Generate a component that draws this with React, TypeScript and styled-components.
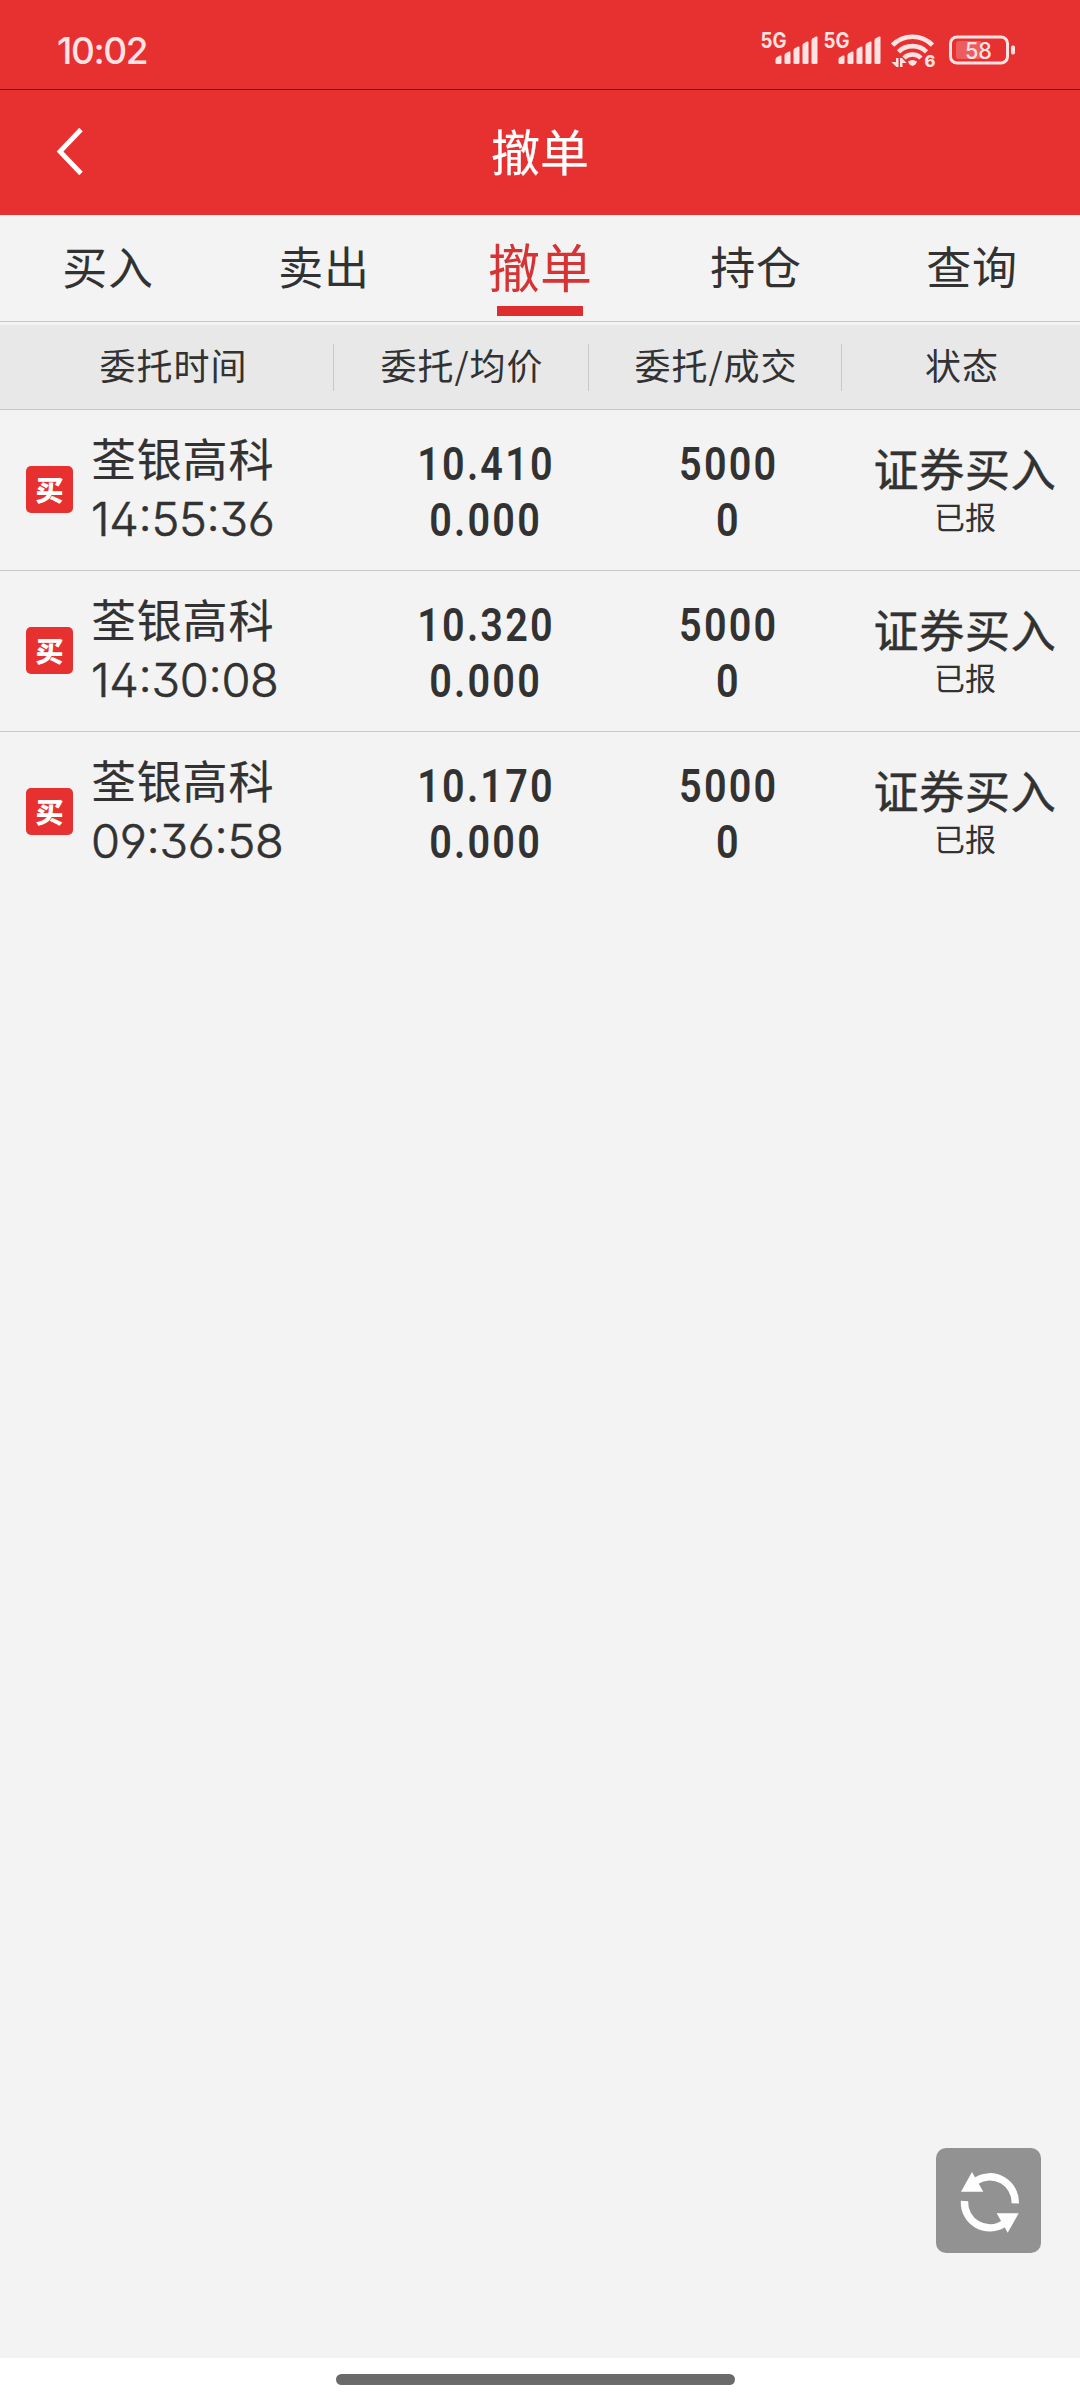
import React from "react";
import styled, { createGlobalStyle } from "styled-components";

const sans = `Inter, "Noto Sans CJK SC", sans-serif`;
const cjk = `"Noto Sans CJK SC", sans-serif`;
const pale = "#ffe3e3";

const GlobalStyle = createGlobalStyle`
  * { box-sizing: border-box; }
  body { margin: 0; background: #f3f3f3; }
`;

const Screen = styled.div`
  position: relative;
  display: flex;
  flex-direction: column;
  width: 1080px;
  height: 2400px;
  background: #f3f3f3;
  color: #323232;
  font-family: ${cjk};
  white-space: nowrap;
  overflow: hidden;
`;

const StatusBar = styled.div`
  display: flex;
  align-items: center;
  justify-content: space-between;
  height: 90px;
  padding: 12px 65px 0 57px;
  background: #e73131;
  border-bottom: 1px solid #4a0d10;
`;

const Clock = styled.span`
  font: 500 37px/40px ${sans};
  letter-spacing: -1.4px;
  color: ${pale};
`;

const StatusIcons = styled.svg`
  display: block;
  width: 260px;
  height: 56px;
`;

const TitleBar = styled.header`
  display: grid;
  grid-template-columns: 140px 1fr 140px;
  align-items: center;
  height: 125px;
  padding-bottom: 2px;
  background: #e73131;
`;

const BackButton = styled.button`
  display: flex;
  padding: 0 0 0 54px;
  border: 0;
  background: none;
`;

const Title = styled.h1`
  margin: 0;
  padding-bottom: 3px;
  text-align: center;
  color: #fff;
  font: 400 49px/60px ${cjk};
  -webkit-text-stroke: 0.2px currentColor;
`;

const Tabs = styled.nav`
  display: grid;
  grid-template-columns: repeat(5, 1fr);
  height: 107px;
  border-bottom: 1px solid #c8c8c8;
`;

const Tab = styled.div<{ $active?: boolean }>`
  display: flex;
  flex-direction: column;
  align-items: center;
  justify-content: space-between;
  padding: 20px 0 5px;
  font-size: ${(p) => (p.$active ? 52 : 45)}px;
  line-height: 62px;
  letter-spacing: ${(p) => (p.$active ? 0 : 0.8)}px;
  color: ${(p) => (p.$active ? "#d63434" : "#323232")};
`;

const Underline = styled.span`
  width: 86px;
  height: 10px;
  background: #de2d2f;
`;

const HeadRow = styled.div`
  display: grid;
  grid-template-columns: 334px 255px 253px 1fr;
  align-items: center;
  height: 88px;
  border-top: 3px solid #f3f3f3;
  border-bottom: 1px solid #c8c8c8;
  background: #e8e8e8;
`;

const HeadCell = styled.div<{ $shift?: number }>`
  height: 47px;
  padding-left: ${(p) => p.$shift ?? 2}px;
  border-right: 1px solid #c8c8c8;
  text-align: center;
  font-size: 36px;
  line-height: 40px;
  letter-spacing: 1px;
  &:last-child { border-right: 0; }
`;

const OrderRow = styled.div`
  display: grid;
  grid-template-columns: 91px 272px 243px 243px 1fr;
  height: 161px;
  border-bottom: 1px solid #c8c8c8;
  &:last-child { border-bottom: 0; }
`;

const Badge = styled.span`
  align-self: center;
  margin: 0 0 2px 26px;
  width: 47px;
  height: 47px;
  border-radius: 5px;
  background: #e73131;
  color: #fff;
  text-align: center;
  font: 900 28px/47px ${cjk};
`;

const NameCell = styled.div`
  padding-top: 18px;
`;

const Name = styled.div`
  height: 60px;
  font: 400 45px/60px ${cjk};
  letter-spacing: 0.8px;
  -webkit-text-stroke: 0.2px currentColor;
`;

const Time = styled.div`
  font: 300 47px/62px ${sans};
  letter-spacing: -0.3px;
  -webkit-text-stroke: 0.6px currentColor;
  font-feature-settings: "cv09", "cv03", "cv04", "ss01", "calt";
`;

const NumberCell = styled.div`
  display: flex;
  flex-direction: column;
  align-items: center;
  padding-top: 26px;
`;

const Figure = styled.span`
  font: 600 46px/56px Roboto, sans-serif;
  letter-spacing: 2.6px;
  margin-right: -2.6px;
  transform: scaleX(0.86);
`;

const StateCell = styled.div`
  display: flex;
  flex-direction: column;
  align-items: center;
  padding: 30px 0 0 1px;
`;

const Side = styled.div`
  height: 56px;
  font: 400 45px/56px ${cjk};
  letter-spacing: 0.8px;
  -webkit-text-stroke: 0.5px currentColor;
`;

const State = styled.div`
  font: 400 31px/40px ${cjk};
`;

const Refresh = styled.button`
  position: absolute;
  left: 936px;
  top: 2148px;
  width: 105px;
  height: 105px;
  padding: 0;
  border: 0;
  border-radius: 10px;
  background: #929292;
`;

const HomeBar = styled.footer`
  display: flex;
  justify-content: center;
  align-items: flex-start;
  margin-top: auto;
  height: 42px;
  padding: 16px 9px 0 0;
  background: #fff;
`;

const HomePill = styled.span`
  width: 399px;
  height: 11px;
  border-radius: 6px;
  background: #6a6a6a;
`;

const Signal = ({ x }: { x: number }) => (
  <g transform={`translate(${x} 0)`}>
    <text x="0" y="17" fontFamily="Inter" fontWeight="700" fontSize="21" textLength="26" lengthAdjust="spacingAndGlyphs">5G</text>
    {[7, 11, 16, 21, 26].map((h, i) => (
      <path key={h} d={`M${15 + i * 9} 31.5v${-(h - 4)}q0-1.5 1.4-2.3l3-1.6q1.6-.5 1.6 1V31.5q0 1.5-1.5 1.5h-3q-1.5 0-1.5-1.5z`} />
    ))}
  </g>
);

const rows = [
  { time: "14:55:36", price: "10.410" },
  { time: "14:30:08", price: "10.320" },
  { time: "09:36:58", price: "10.170" },
];

export default function App() {
  return (
    <Screen>
      <GlobalStyle />
      <StatusBar>
        <Clock>10:02</Clock>
        <StatusIcons viewBox="0 -8 260 56" fill={pale}>
          <Signal x={5.5} />
          <Signal x={68.5} />
          <g fill="none" stroke={pale} strokeWidth="4.600">
            <path d="M137.500 14.200A28 28 0 0 1 177.500 14.200" />
            <path d="M143.500 20.800A20 20 0 0 1 171.500 20.800" />
            <path d="M149 27A12 12 0 0 1 166 27" />
          </g>
          <path d="M153 30.500Q157.500 27.500 162 30.500Q161 34 157.500 35Q154 34 153 30.500Z" />
          <path d="M141 27h2.500v9h-2l-5-5h4.500zM145 36v-9h2l4.500 5h-4v4z" />
          <text x="169.500" y="36" fontFamily="Inter" fontWeight="800" fontSize="16.500" stroke="#e73131" strokeWidth="2" paintOrder="stroke">6</text>
          <rect x="195.500" y="6" width="57" height="26" rx="6.500" fill="none" stroke={pale} strokeWidth="3" />
          <rect x="201" y="10" width="26" height="18" rx="3" opacity="0.25" />
          <rect x="256" y="14.500" width="4" height="9" rx="1.700" />
          <text x="210" y="27.500" fontFamily="Inter" fontWeight="500" fontSize="23" textLength="27" lengthAdjust="spacingAndGlyphs">58</text>
        </StatusIcons>
      </StatusBar>

      <TitleBar>
        <BackButton aria-label="返回">
          <svg width="32" height="50" viewBox="0 0 32 50" fill="none" stroke="#fff" strokeWidth="4.800">
            <path d="M27 2.500L6 24.500L27 46.500" />
          </svg>
        </BackButton>
        <Title>撤单</Title>
      </TitleBar>

      <Tabs>
        <Tab>买入</Tab>
        <Tab>卖出</Tab>
        <Tab $active>撤单<Underline /></Tab>
        <Tab>持仓</Tab>
        <Tab>查询</Tab>
      </Tabs>

      <HeadRow>
        <HeadCell $shift={14}>委托时间</HeadCell>
        <HeadCell>委托/均价</HeadCell>
        <HeadCell>委托/成交</HeadCell>
        <HeadCell>状态</HeadCell>
      </HeadRow>

      <div>
        {rows.map((r) => (
          <OrderRow key={r.time}>
            <Badge>买</Badge>
            <NameCell>
              <Name>荃银高科</Name>
              <Time>{r.time}</Time>
            </NameCell>
            <NumberCell>
              <Figure>{r.price}</Figure>
              <Figure>0.000</Figure>
            </NumberCell>
            <NumberCell>
              <Figure>5000</Figure>
              <Figure>0</Figure>
            </NumberCell>
            <StateCell>
              <Side>证券买入</Side>
              <State>已报</State>
            </StateCell>
          </OrderRow>
        ))}
      </div>

      <HomeBar>
        <HomePill />
      </HomeBar>

      <Refresh aria-label="刷新">
        <svg width="105" height="105" viewBox="0 0 105 105" fill="none">
          <path d="M79.200 55.300A25.300 25.300 0 0 0 40 33" stroke="#fff" strokeWidth="7.400" />
          <path d="M28.500 53A25.300 25.300 0 0 0 68 75.500" stroke="#fff" strokeWidth="7.400" />
          <path d="M36 24L25 43.700H47.300ZM82.700 65.300H60.700L71.700 84.700Z" fill="#fff" />
        </svg>
      </Refresh>
    </Screen>
  );
}
